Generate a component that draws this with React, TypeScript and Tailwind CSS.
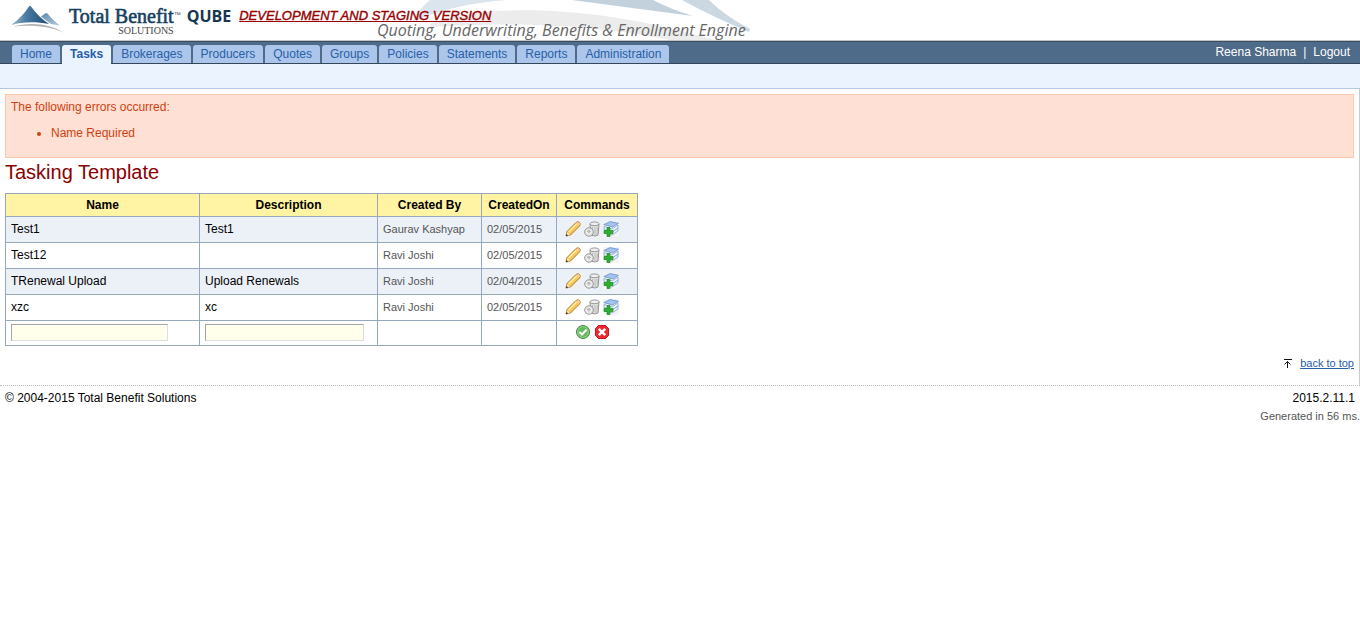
import React from "react";

const tabs = ["Home", "Tasks", "Brokerages", "Producers", "Quotes", "Groups", "Policies", "Statements", "Reports", "Administration"];

const rows = [
  { name: "Test1", description: "Test1", by: "Gaurav Kashyap", on: "02/05/2015" },
  { name: "Test12", description: "", by: "Ravi Joshi", on: "02/05/2015" },
  { name: "TRenewal Upload", description: "Upload Renewals", by: "Ravi Joshi", on: "02/04/2015" },
  { name: "xzc", description: "xc", by: "Ravi Joshi", on: "02/05/2015" },
];

function Mountains() {
  return (
    <svg width="54" height="30" viewBox="0 0 54 30" aria-hidden="true">
      <defs>
        <linearGradient id="peak" x1="0" y1="0" x2="1" y2="0">
          <stop offset="0" stopColor="#9dbbd0" />
          <stop offset="0.4" stopColor="#4a7ba2" />
          <stop offset="1" stopColor="#1d4a73" />
        </linearGradient>
        <linearGradient id="peakSmall" x1="0" y1="0" x2="1" y2="1">
          <stop offset="0" stopColor="#5e8bad" />
          <stop offset="1" stopColor="#b5cbdb" />
        </linearGradient>
      </defs>
      <path d="M0 21 C8 15.500 14 8.500 18 2.500 Q19 1 20 2.500 C25 9.500 31 15.500 38 20 C25 17.500 12 17.500 0 21Z" fill="url(#peak)" />
      <path d="M30 12.500 L34.500 9.200 Q35.500 8.500 36.500 9.600 C40 14 44 18 49 21.500 Q44 20.500 40 20 Q34 16 30 12.500Z" fill="url(#peakSmall)" />
      <path d="M2 22.500 C20 17.500 40 20 53 29 C40 22.500 22 20.500 2 22.500Z" fill="#b3b3b5" />
    </svg>
  );
}

function Swoosh() {
  return (
    <svg className="absolute left-[370px] top-0" width="390" height="40" viewBox="0 0 390 40" aria-hidden="true">
      <path d="M60 0 L136 0 C100 3 68 10 42 22 Q50 8 60 0Z" fill="#dbe5ee" />
      <path d="M60 24 C110 4 220 3 345 40 L300 40 C220 24 140 22 60 27Z" fill="#ececec" />
      <path d="M202 0 L283 0 Q300 9 323 16 Q262 8 202 0Z" fill="#c3d1dc" />
      <path d="M312 0 L339 0 Q355 16 380 29 L379 32 Q345 18 312 0Z" fill="#cbd8e2" />
    </svg>
  );
}

function PencilIcon() {
  return (
    <svg width="16" height="16" viewBox="0 0 16 16" aria-hidden="true">
      <path d="M1 15 L2 10.500 L11 1.500 Q13 0 14.500 1.500 Q16 3 14.500 5 L5.500 14Z" fill="#f8c85c" stroke="#b5741a" strokeWidth="1" />
      <path d="M3.500 11 L11.500 3" stroke="#fff0a8" strokeWidth="1.400" />
      <path d="M11 2.200 L13.800 5 L14.600 4 Q15.300 2.500 14 1.600 Q12.500 .8 11.600 1.600Z" fill="#f6cf9d" />
      <path d="M2 11 L5 14 L1.500 15Z" fill="#fbe5bd" />
      <path d="M1 15.300 L1.500 13 L3.300 14.600Z" fill="#2b2b2b" />
    </svg>
  );
}

function TrashIcon() {
  return (
    <svg width="16" height="16" viewBox="0 0 16 16" aria-hidden="true">
      <path d="M6 3 L7 14 Q11 16 14 14 L15 3Z" fill="#e2e2e2" stroke="#888" strokeWidth=".9" />
      <path d="M8.500 6v8M11 6v8M13.200 6v7.500" stroke="#b4b4b4" strokeWidth=".9" />
      <ellipse cx="10.500" cy="2.800" rx="4.500" ry="1.900" fill="#f0f0f0" stroke="#8d8d8d" strokeWidth=".9" />
      <ellipse cx="5" cy="11" rx="4.300" ry="4.200" fill="#ececec" stroke="#8a8a8a" strokeWidth=".9" />
      <path d="M3 10.500 Q5 8.500 6.500 10.500 M5 10v2.500" fill="none" stroke="#a2a2a2" />
    </svg>
  );
}

function StackAddIcon() {
  return (
    <svg width="16" height="16" viewBox="0 0 16 16" aria-hidden="true">
      <rect width="16" height="16" fill="#f4f4f4" />
      <path d="M2 9 L9 11 L15 7 L15 10 L9 14 L2 12Z" fill="#eef4fd" stroke="#7f9fd3" strokeWidth=".8" />
      <path d="M1 5.500 L9 8 L15 4 L15 7 L9 11 L1 8.500Z" fill="#f1f6fe" stroke="#7f9fd3" strokeWidth=".8" />
      <path d="M.8 3.600 L7 .6 L15.500 2.300 L9.500 6Z" fill="#a5c3ef" stroke="#6a8fcb" strokeWidth=".8" />
      <path d="M4 6.500h3v3h3v3h-3v3h-3v-3h-3v-3h3z" fill="#2fae2f" stroke="#1d8c1d" strokeWidth=".7" />
    </svg>
  );
}

function AcceptIcon() {
  return (
    <svg width="16" height="16" viewBox="0 0 16 16" aria-hidden="true">
      <circle cx="8" cy="8" r="6.500" fill="#62b85c" stroke="#3d8a3a" />
      <circle cx="8" cy="8" r="5.400" fill="none" stroke="#a7dba2" strokeWidth=".8" />
      <path d="M4.500 8 L7 10.500 L11.500 5.800" fill="none" stroke="#fff" strokeWidth="2" />
    </svg>
  );
}

function CancelIcon() {
  return (
    <svg width="16" height="16" viewBox="0 0 16 16" aria-hidden="true">
      <path d="M4.500 1.500h7L14.500 4.500v7L11.500 14.500h-7L1.500 11.500v-7Z" fill="#ee2a30" stroke="#c9141b" strokeLinejoin="round" />
      <path d="M4.800 4.800l6.400 6.400M11.200 4.800l-6.400 6.400" stroke="#fff" strokeWidth="2.400" />
    </svg>
  );
}

function IconButton({ label, children }: { label: string; children: React.ReactNode }) {
  return (
    <button type="button" aria-label={label} title={label} className="block size-4 cursor-pointer">
      {children}
    </button>
  );
}

const frame = "border border-[#95a8bd] px-[5px]";
const cell = frame + " pb-[2px]";
const smallCell = frame + " text-[11px] text-[#555]";
const field = "block h-[17px] border border-[#ddd] border-t-[#a5a5a5] border-l-[#a5a5a5] bg-[#ffffec] px-1 text-xs outline-none";

export default function App() {
  return (
    <div id="top" className="bg-white font-['Liberation_Sans',Arial,sans-serif] text-xs text-black">
      <header className="relative flex h-[41px] items-start overflow-hidden border-b border-[#c4c4c4]">
        <Swoosh />
        <div className="ml-[11px] mt-1">
          <Mountains />
        </div>
        <div className="relative ml-1 mt-[6px] flex flex-col items-end text-[#173f5f]">
          <div className="font-['Liberation_Serif',serif] text-[20px] leading-5 [-webkit-text-stroke:0.6px_#173f5f]">
            Total Benefit
          </div>
          <div className="font-['Liberation_Serif',serif] text-[10px] leading-[10px] text-[#444]">SOLUTIONS</div>
        </div>
        <span className="mt-[11px] text-[7px] leading-[8px] text-[#555]">™</span>
        <span className="ml-[6px] mt-[6px] font-['Open_Sans',sans-serif] text-base font-bold leading-5 text-[#173652]">QUBE</span>
        <em className="relative ml-2 mt-2 text-[13px] leading-4 text-[#990000] underline [-webkit-text-stroke:0.4px_#990000]">
          DEVELOPMENT AND STAGING VERSION
        </em>
        <p className="absolute left-[377px] top-5 whitespace-nowrap font-['Open_Sans',sans-serif] text-base italic leading-5 text-[#666]">
          Quoting, Underwriting, Benefits &amp; Enrollment Engine
        </p>
      </header>

      <nav className="flex h-[23px] items-end justify-between border-y border-t-[#3b4d63] border-b-[#34465c] bg-[#4f6b8a] pl-3 pr-[10px]">
        <ul className="flex gap-[2px]">
          {tabs.map((tab) => (
            <li key={tab}>
              {tab === "Tasks" ? (
                <a href="#tasks" aria-current="page" className="-mb-px block h-[19px] rounded-t-[3px] bg-[#ebf3ff] px-2 font-bold leading-[18px] text-[#285ea8]">
                  {tab}
                </a>
              ) : (
                <a href={"#" + tab.toLowerCase()} className="block h-[18px] rounded-t-[3px] bg-[#abc6ea] px-2 leading-[18px] text-[#285ea8]">
                  {tab}
                </a>
              )}
            </li>
          ))}
        </ul>
        <div className="flex gap-[7px] self-start leading-5 text-white">
          <span>Reena Sharma</span>
          <span>|</span>
          <a href="#logout">Logout</a>
        </div>
      </nav>

      <div className="h-[25px] border-b border-[#b9c6df] bg-[#ebf3ff]" />

      <main className="border-r border-[#ccc] px-[5px] pt-[5px]">
        <div role="alert" className="h-16 border border-[#ffc6ac] bg-[#ffe0d5] px-[5px] pt-1 leading-4 text-[#d23f0f]">
          <p>The following errors occurred:</p>
          <ul className="mt-[10px] list-disc pl-10">
            <li>Name Required</li>
          </ul>
        </div>

        <h1 className="pt-[2px] text-[20px] leading-6 text-[#8b0000]">Tasking Template</h1>

        <table className="mt-[9px] w-[633px] table-fixed border-collapse">
          <colgroup>
            <col className="w-[194px]" />
            <col className="w-[178px]" />
            <col className="w-[104px]" />
            <col className="w-[75px]" />
            <col className="w-[81px]" />
          </colgroup>
          <thead>
            <tr className="h-[23px] bg-[#fff4a3]">
              {["Name", "Description", "Created By", "CreatedOn", "Commands"].map((title) => (
                <th key={title} scope="col" className={frame}>
                  {title}
                </th>
              ))}
            </tr>
          </thead>
          <tbody>
            {rows.map((row) => (
              <tr key={row.name} className="h-[26px] odd:bg-[#ecf1f8]">
                <td className={cell}>{row.name}</td>
                <td className={cell}>{row.description}</td>
                <td className={smallCell}>{row.by}</td>
                <td className={smallCell}>{row.on}</td>
                <td className={cell}>
                  <div className="ml-[3px] flex gap-[3px]">
                    <IconButton label="Edit"><PencilIcon /></IconButton>
                    <IconButton label="Delete"><TrashIcon /></IconButton>
                    <IconButton label="Add items"><StackAddIcon /></IconButton>
                  </div>
                </td>
              </tr>
            ))}
            <tr className="h-[25px]">
              <td className={cell}>
                <input type="text" aria-label="Name" className={field + " w-[157px]"} />
              </td>
              <td className={cell}>
                <input type="text" aria-label="Description" className={field + " w-[159px]"} />
              </td>
              <td className={cell} />
              <td className={cell} />
              <td className={cell}>
                <div className="flex justify-center gap-[3px] pr-[10px]">
                  <IconButton label="Save"><AcceptIcon /></IconButton>
                  <IconButton label="Cancel"><CancelIcon /></IconButton>
                </div>
              </td>
            </tr>
          </tbody>
        </table>

        <div className="flex h-[39px] items-center justify-end gap-2 pb-1 text-[11px]">
          <svg width="9" height="9" viewBox="0 0 9 9" fill="none" stroke="#111" aria-hidden="true">
            <path d="M1 .5h8M4.500 2.500v6.500M1.500 5.500l3-3 3 3" />
          </svg>
          <a href="#top" className="text-[#285ea8] underline">back to top</a>
        </div>
      </main>

      <footer className="border-t border-dotted border-[#bbb] pt-1">
        <div className="flex justify-between px-[5px] leading-4">
          <span>© 2004-2015 Total Benefit Solutions</span>
          <span>2015.2.11.1</span>
        </div>
        <p className="pt-[2px] text-right text-[11px] leading-4 text-[#555]">Generated in 56 ms.</p>
      </footer>
    </div>
  );
}
